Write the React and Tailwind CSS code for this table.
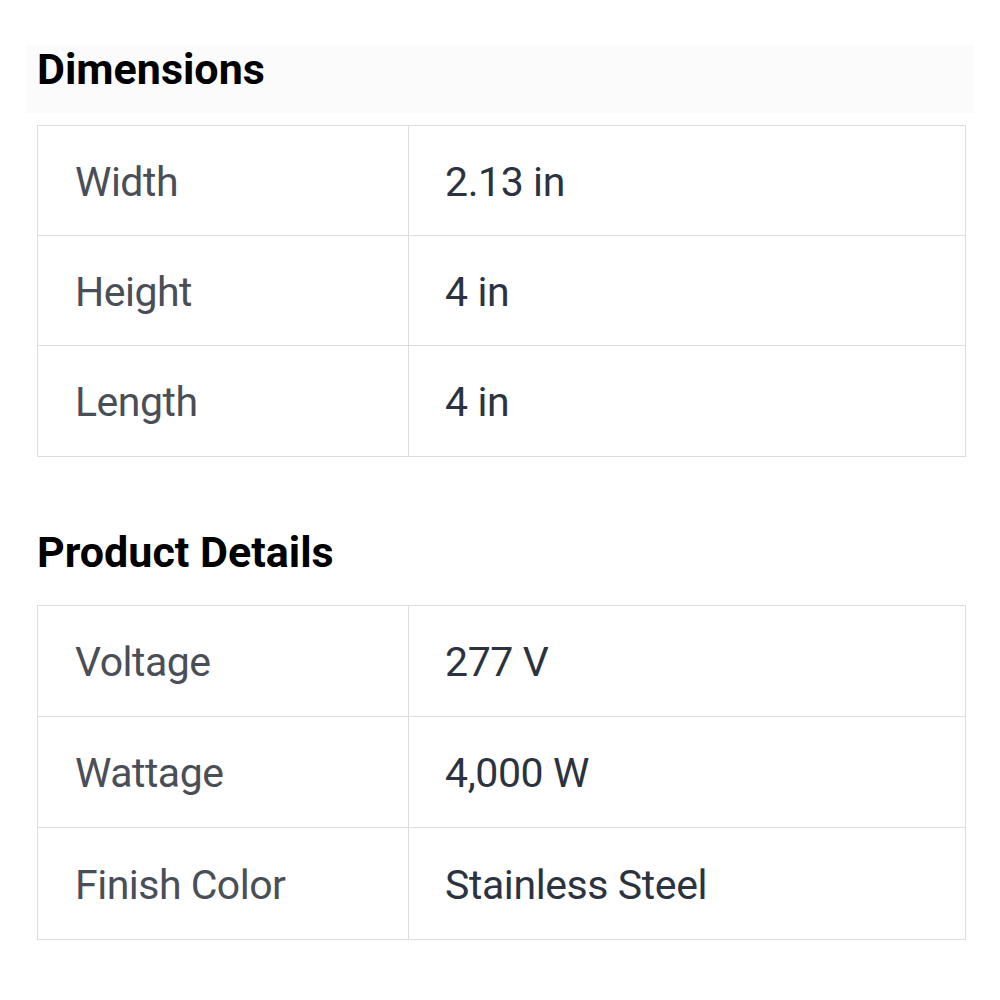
import React from 'react';

const sections = [
  {
    title: 'Dimensions',
    rowHeight: 'h-[110px]',
    rows: [
      ['Width', '2.13 in'],
      ['Height', '4 in'],
      ['Length', '4 in'],
    ],
  },
  {
    title: 'Product Details',
    rowHeight: 'h-[111px]',
    rows: [
      ['Voltage', '277 V'],
      ['Wattage', '4,000 W'],
      ['Finish Color', 'Stainless Steel'],
    ],
  },
];

const SpecTable = ({ rows, rowHeight }) => (
  <div className="ml-[37px] w-[929px] border border-[#dcdcdc]">
    {rows.map(([label, value], i) => (
      <div
        key={label}
        className={`grid grid-cols-[370px_1fr] ${rowHeight} ${i < rows.length - 1 ? 'border-b border-[#dcdcdc]' : ''}`}
      >
        <div className="flex items-center pl-[37px] pt-[4px] text-[41px] text-[#4a4e57] tracking-[-0.5px]">
          {label}
        </div>
        <div className="flex items-center pl-[36px] pt-[4px] border-l border-[#dcdcdc] text-[41px] text-[#2c3340] tracking-[-0.4px]">
          {value}
        </div>
      </div>
    ))}
  </div>
);

export default function App() {
  return (
    <div className="w-[1000px] h-[1000px] bg-white font-['Roboto',sans-serif]">
      <div className="pt-[45px]">
        <div className="mx-[26px] h-[68px] bg-[#fbfbfb] pl-[11px]">
          <h2 className="text-[43px] leading-[48px] font-bold text-black">{sections[0].title}</h2>
        </div>
        <div className="mt-[12px]">
          <SpecTable rows={sections[0].rows} rowHeight={sections[0].rowHeight} />
        </div>
        <h2 className="mt-[71px] ml-[37px] text-[43px] leading-[48px] font-bold text-black">
          {sections[1].title}
        </h2>
        <div className="mt-[29px]">
          <SpecTable rows={sections[1].rows} rowHeight={sections[1].rowHeight} />
        </div>
      </div>
    </div>
  );
}
